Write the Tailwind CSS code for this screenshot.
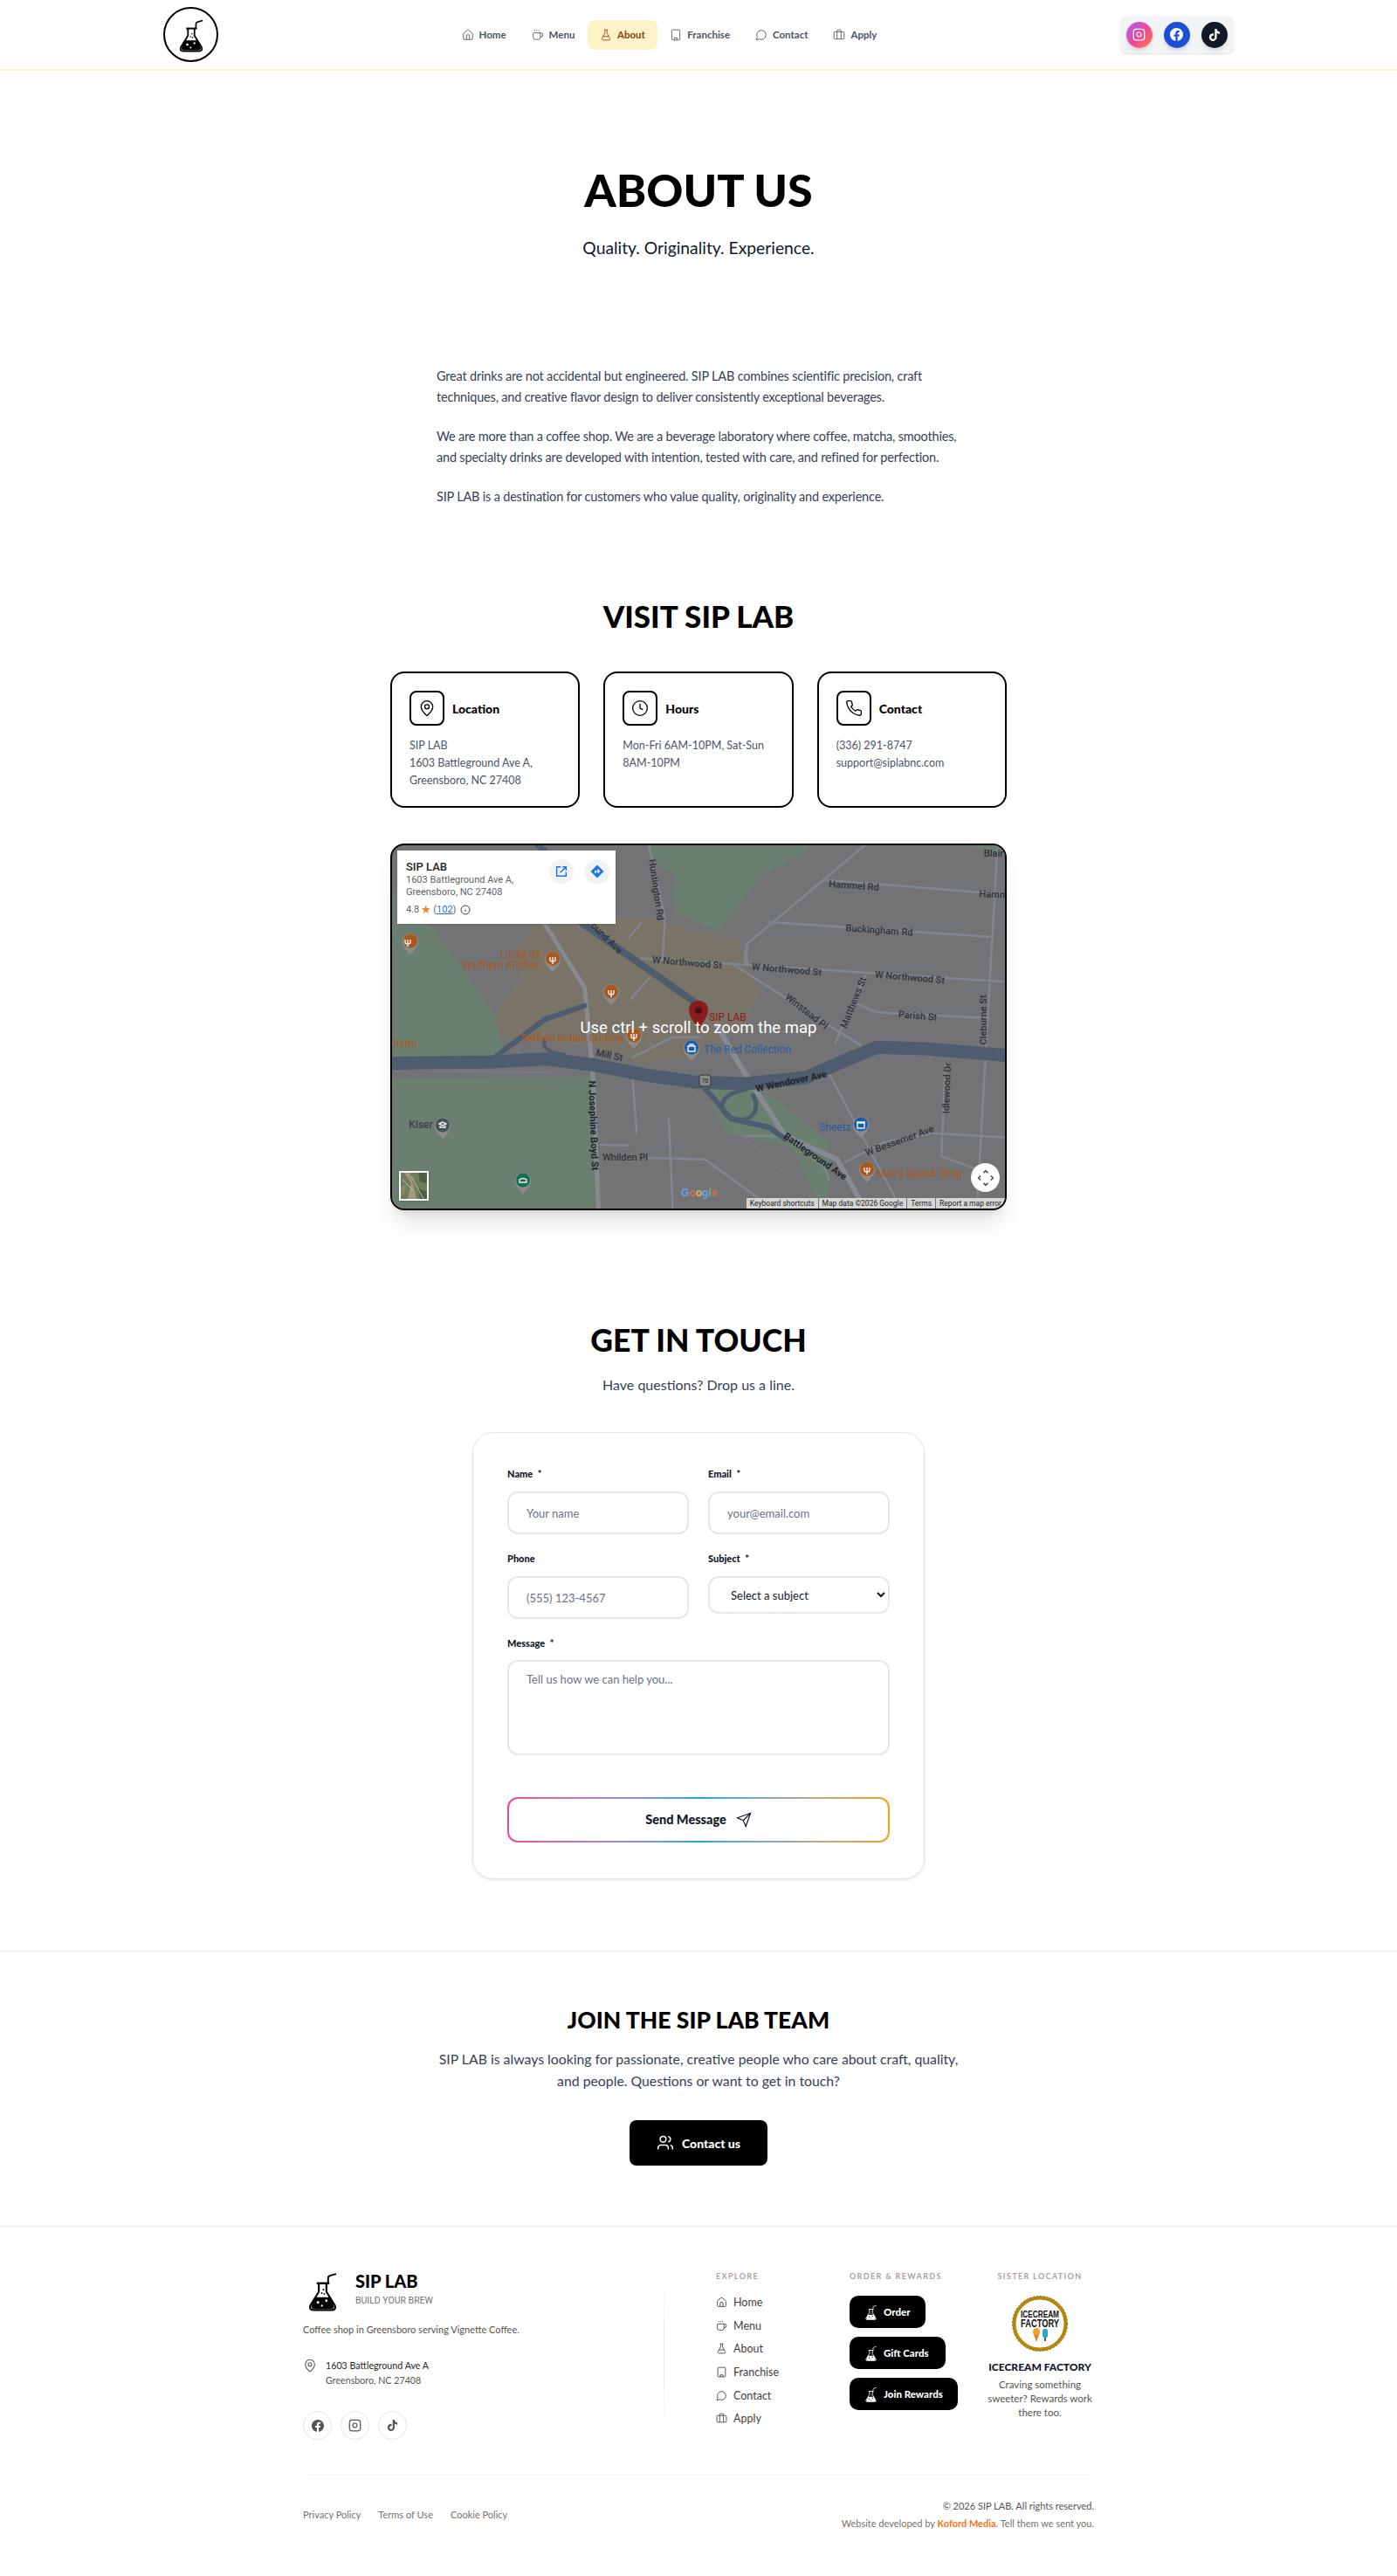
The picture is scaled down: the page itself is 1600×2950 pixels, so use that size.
<!DOCTYPE html>
<html lang="en">
<head>
<meta charset="utf-8">
<title>About - SIP LAB</title>
<script src="https://cdn.jsdelivr.net/npm/@tailwindcss/browser@4"></script>
</head>
<body class="bg-white [font-family:Lato,sans-serif] text-[#374151]">
<svg class="hidden">
  <symbol id="flask" viewBox="0 0 34 47">
    <path d="M23.5 14V8.5Q23.5 6 26 5.4L33 3.5" fill="none" stroke="currentColor" stroke-width="2"/>
    <path d="M10 14.5H25" fill="none" stroke="currentColor" stroke-width="2.4"/>
    <path d="M12.5 15V24.5L2.6 40.5Q0.5 46 6 46H28Q33.5 46 31.4 40.5L21.5 24.5V15" fill="none" stroke="currentColor" stroke-width="2.2" stroke-linejoin="round"/>
    <path fill-rule="evenodd" fill="currentColor" d="M8.6 31H25.4L30 40.5Q31.5 44.6 27.5 44.6H6.5Q2.5 44.6 4 40.5ZM10 37a1.6 1.6 0 1 0 3.2 0a1.6 1.6 0 1 0-3.2 0ZM20 35a1.4 1.4 0 1 0 2.8 0a1.4 1.4 0 1 0-2.8 0ZM15 41a1.2 1.2 0 1 0 2.4 0a1.2 1.2 0 1 0-2.4 0Z"/>
    <circle cx="18" cy="22" r="1" fill="currentColor"/><circle cx="16" cy="26" r="1" fill="currentColor"/><circle cx="19" cy="27" r="1" fill="currentColor"/>
  </symbol>
  <symbol id="home" viewBox="0 0 24 24"><path d="M15 21v-8a1 1 0 0 0-1-1h-4a1 1 0 0 0-1 1v8"/><path d="M3 10a2 2 0 0 1 .709-1.528l7-5.999a2 2 0 0 1 2.582 0l7 5.999A2 2 0 0 1 21 10v9a2 2 0 0 1-2 2H5a2 2 0 0 1-2-2z"/></symbol>
  <symbol id="coffee" viewBox="0 0 24 24"><path d="M10 2v2"/><path d="M14 2v2"/><path d="M16 8a1 1 0 0 1 1 1v8a4 4 0 0 1-4 4H7a4 4 0 0 1-4-4V9a1 1 0 0 1 1-1h14a4 4 0 1 1 0 8h-1"/><path d="M6 2v2"/></symbol>
  <symbol id="conical" viewBox="0 0 24 24"><path d="M14 2v6a2 2 0 0 0 .245.96l5.51 10.08A2 2 0 0 1 18 22H6a2 2 0 0 1-1.755-2.96l5.51-10.08A2 2 0 0 0 10 8V2"/><path d="M6.453 15h11.094"/><path d="M8.5 2h7"/></symbol>
  <symbol id="building" viewBox="0 0 24 24"><rect width="16" height="20" x="4" y="2" rx="2" ry="2"/><path d="M9 22v-4h6v4"/><path d="M8 6h.01"/><path d="M16 6h.01"/><path d="M12 6h.01"/><path d="M12 10h.01"/><path d="M12 14h.01"/><path d="M16 10h.01"/><path d="M16 14h.01"/><path d="M8 10h.01"/><path d="M8 14h.01"/></symbol>
  <symbol id="message" viewBox="0 0 24 24"><path d="M7.9 20A9 9 0 1 0 4 16.1L2 22Z"/></symbol>
  <symbol id="briefcase" viewBox="0 0 24 24"><path d="M16 20V4a2 2 0 0 0-2-2h-4a2 2 0 0 0-2 2v16"/><rect width="20" height="14" x="2" y="6" rx="2"/></symbol>
  <symbol id="pin" viewBox="0 0 24 24"><path d="M20 10c0 4.993-5.539 10.193-7.399 11.799a1 1 0 0 1-1.202 0C9.539 20.193 4 14.993 4 10a8 8 0 0 1 16 0"/><circle cx="12" cy="10" r="3"/></symbol>
  <symbol id="insta" viewBox="0 0 24 24"><rect width="20" height="20" x="2" y="2" rx="5" ry="5"/><path d="M16 11.37A4 4 0 1 1 12.63 8 4 4 0 0 1 16 11.37z"/><path d="M17.5 6.5h.01"/></symbol>
  <symbol id="fb" viewBox="0 0 24 24"><path d="M24 12.073c0-6.627-5.373-12-12-12s-12 5.373-12 12c0 5.99 4.388 10.954 10.125 11.854v-8.385H7.078v-3.47h3.047V9.43c0-3.007 1.792-4.669 4.533-4.669 1.312 0 2.686.235 2.686.235v2.953H15.83c-1.491 0-1.956.925-1.956 1.874v2.25h3.328l-.532 3.47h-2.796v8.385C19.612 23.027 24 18.062 24 12.073z"/></symbol>
  <symbol id="tt" viewBox="0 0 24 24"><path d="M12.525.02c1.31-.02 2.61-.01 3.91-.02.08 1.53.63 3.09 1.75 4.17 1.12 1.11 2.7 1.62 4.24 1.79v4.03c-1.44-.05-2.89-.35-4.2-.97-.57-.26-1.1-.59-1.62-.93-.01 2.92.01 5.84-.02 8.75-.08 1.4-.54 2.79-1.35 3.94-1.31 1.92-3.58 3.17-5.91 3.21-1.43.08-2.86-.31-4.08-1.03-2.02-1.19-3.44-3.37-3.65-5.71-.02-.5-.03-1-.01-1.49.18-1.9 1.12-3.72 2.58-4.96 1.66-1.44 3.98-2.13 6.15-1.72.02 1.48-.04 2.96-.04 4.44-.99-.32-2.15-.23-3.02.37-.63.41-1.11 1.04-1.36 1.75-.21.51-.15 1.07-.14 1.61.24 1.64 1.82 3.02 3.5 2.87 1.12-.01 2.19-.66 2.77-1.61.19-.33.4-.67.41-1.06.1-1.79.06-3.57.07-5.36.01-4.03-.01-8.05.02-12.07z"/></symbol>
  <symbol id="poi" viewBox="0 0 20 26"><path d="M10 25.5C7 21 .8 17 .8 10a9.2 9.2 0 0 1 18.4 0C19.2 17 13 21 10 25.5Z" fill="#8b8b8b"/><circle cx="10" cy="9.5" r="8"/></symbol>
</svg>

<header class="h-[81px] border-b-2 border-[#fef3c7] px-[187px] flex items-center justify-between">
  <div class="w-[63px] h-[63px] rounded-full border-2 border-black flex items-center justify-center text-black">
    <svg class="w-[28px] h-[40px]"><use href="#flask"/></svg>
  </div>
  <nav class="flex items-center text-[11.5px] font-bold text-[#4b5563]">
    <a class="flex items-center gap-[6px] h-[34px] px-[14.5px]"><svg class="w-[14px] h-[14px]" fill="none" stroke="currentColor" stroke-width="1.5"><use href="#home"/></svg>Home</a>
    <a class="flex items-center gap-[6px] h-[34px] px-[14.5px]"><svg class="w-[14px] h-[14px]" fill="none" stroke="currentColor" stroke-width="1.5"><use href="#coffee"/></svg>Menu</a>
    <a class="flex items-center gap-[6px] h-[34px] px-[14px] rounded-lg bg-[#fef3c7] text-[#92400e]"><svg class="w-[14px] h-[14px]" fill="none" stroke="currentColor" stroke-width="1.5"><use href="#conical"/></svg>About</a>
    <a class="flex items-center gap-[6px] h-[34px] px-[14.5px]"><svg class="w-[14px] h-[14px]" fill="none" stroke="currentColor" stroke-width="1.5"><use href="#building"/></svg>Franchise</a>
    <a class="flex items-center gap-[6px] h-[34px] px-[14.5px]"><svg class="w-[14px] h-[14px]" fill="none" stroke="currentColor" stroke-width="1.5"><use href="#message"/></svg>Contact</a>
    <a class="flex items-center gap-[6px] h-[34px] px-[14.5px]"><svg class="w-[14px] h-[14px]" fill="none" stroke="currentColor" stroke-width="1.5"><use href="#briefcase"/></svg>Apply</a>
  </nav>
  <div class="w-[130px] h-[43px] rounded-lg bg-[#f3f4f6] flex items-center justify-center gap-[13px] shadow-sm">
    <span class="w-[30px] h-[30px] rounded-full bg-linear-to-br from-[#a855f7] via-[#ec4899] to-[#f97316] text-white flex items-center justify-center shadow-md"><svg class="w-[15px] h-[15px]" fill="none" stroke="currentColor" stroke-width="2"><use href="#insta"/></svg></span>
    <span class="w-[30px] h-[30px] rounded-full bg-[#1d4ed8] text-white flex items-center justify-center shadow-md"><svg class="w-[15px] h-[15px]" fill="currentColor"><use href="#fb"/></svg></span>
    <span class="w-[30px] h-[30px] rounded-full bg-[#111827] text-white flex items-center justify-center shadow-md"><svg class="w-[14px] h-[14px]" fill="currentColor"><use href="#tt"/></svg></span>
  </div>
</header>

<main>
  <section class="text-center">
    <h1 class="mt-[108px] text-[52px] leading-[56px] font-black text-black">ABOUT US</h1>
    <p class="mt-[25px] text-[19.3px] leading-[28px] text-[#111827]">Quality. Originality. Experience.</p>
  </section>

  <section class="mt-[121px] ml-[500px] w-[620px] whitespace-nowrap text-[14.5px] tracking-[-0.19px] leading-[24px] text-[#374151] flex flex-col gap-[21px]">
    <p>Great drinks are not accidental but engineered. SIP LAB combines scientific precision, craft<br>techniques, and creative flavor design to deliver consistently exceptional beverages.</p>
    <p>We are more than a coffee shop. We are a beverage laboratory where coffee, matcha, smoothies,<br>and specialty drinks are developed with intention, tested with care, and refined for perfection.</p>
    <p>SIP LAB is a destination for customers who value quality, originality and experience.</p>
  </section>

  <section class="mt-[104px]">
    <h2 class="text-center text-[35px] leading-[40px] font-black text-black">VISIT SIP LAB</h2>
    <div class="mt-[44px] mx-auto w-[706px] grid grid-cols-3 gap-[27px]">
      <div class="h-[156px] rounded-2xl border-2 border-black px-5 pt-5">
        <div class="flex items-center gap-[9px]"><span class="w-10 h-10 rounded-lg border-2 border-black flex items-center justify-center"><svg class="w-5 h-5" fill="none" stroke="black" stroke-width="1.6"><use href="#pin"/></svg></span><h3 class="text-[14px] font-black text-black">Location</h3></div>
        <p class="mt-[13px] text-[12.5px] leading-[20px] whitespace-nowrap text-[#4b5563]">SIP LAB<br>1603 Battleground Ave A,<br>Greensboro, NC 27408</p>
      </div>
      <div class="h-[156px] rounded-2xl border-2 border-black px-5 pt-5">
        <div class="flex items-center gap-[9px]"><span class="w-10 h-10 rounded-lg border-2 border-black flex items-center justify-center"><svg class="w-5 h-5" viewBox="0 0 24 24" fill="none" stroke="black" stroke-width="1.6"><circle cx="12" cy="12" r="10"/><path d="M12 6v6l4 2"/></svg></span><h3 class="text-[14px] font-black text-black">Hours</h3></div>
        <p class="mt-[13px] text-[12.5px] leading-[20px] whitespace-nowrap text-[#4b5563]">Mon-Fri 6AM-10PM, Sat-Sun<br>8AM-10PM</p>
      </div>
      <div class="h-[156px] rounded-2xl border-2 border-black px-5 pt-5">
        <div class="flex items-center gap-[9px]"><span class="w-10 h-10 rounded-lg border-2 border-black flex items-center justify-center"><svg class="w-5 h-5" viewBox="0 0 24 24" fill="none" stroke="black" stroke-width="1.6"><path d="M22 16.92v3a2 2 0 0 1-2.18 2 19.79 19.79 0 0 1-8.63-3.07 19.5 19.5 0 0 1-6-6 19.79 19.79 0 0 1-3.07-8.67A2 2 0 0 1 4.11 2h3a2 2 0 0 1 2 1.72 12.84 12.84 0 0 0 .7 2.81 2 2 0 0 1-.45 2.11L8.09 9.91a16 16 0 0 0 6 6l1.27-1.27a2 2 0 0 1 2.11-.45 12.84 12.84 0 0 0 2.81.7A2 2 0 0 1 22 16.92z"/></svg></span><h3 class="text-[14px] font-black text-black">Contact</h3></div>
        <p class="mt-[13px] text-[12.5px] leading-[20px] whitespace-nowrap text-[#4b5563]">(336) 291-8747<br>support@siplabnc.com</p>
      </div>
    </div>

    <div class="relative mt-[41px] mx-auto w-[706px] h-[420px] rounded-2xl border-2 border-black overflow-hidden shadow-xl bg-[#737375] [font-family:Roboto,sans-serif]">
      <svg class="absolute left-[-2px] top-[-2px] w-[706px] h-[420px]" viewBox="0 0 706 420">
        <g transform="translate(-7,-5) scale(0.4591,0.3333)" fill="none" stroke-linecap="round" stroke-linejoin="round">
          <path d="M15 820L530 815V1290H15Z" fill="#6a7f70"/>
          <path d="M15 170L130 320L280 610L300 745L15 760Z" fill="#6a7f70"/>
          <path d="M725 15H1085L945 120L835 315L725 255Z" fill="#6a7f70"/>
          <path d="M655 15H720L830 225L820 225L660 60Z" fill="#6a7f70"/>
          <path d="M800 845L940 850L1110 1040L1110 1230L1075 1230L1020 1060L850 1010Z" fill="#6a7f70"/>
          <path d="M1430 15H1553V60Z" fill="#6a7f70"/>
          <path d="M380 290L500 290L640 270L740 300L880 350L935 530L900 640L760 750L640 770L500 710L290 680L275 600L340 480L330 380Z" fill="#7a7368"/>
          <g stroke="#808690" stroke-width="2.5">
            <path vector-effect="non-scaling-stroke" d="M660 20L700 270L695 410"/>
            <path vector-effect="non-scaling-stroke" d="M1200 20L905 360V430"/>
            <path vector-effect="non-scaling-stroke" d="M960 285L1510 335"/>
            <path vector-effect="non-scaling-stroke" d="M1100 140L1553 190"/>
            <path vector-effect="non-scaling-stroke" d="M640 410L880 430L1553 490"/>
            <path vector-effect="non-scaling-stroke" d="M870 430L1190 710"/>
            <path vector-effect="non-scaling-stroke" d="M1200 470L1125 700"/>
            <path vector-effect="non-scaling-stroke" d="M1170 560L1230 595L1510 615"/>
            <path vector-effect="non-scaling-stroke" d="M1530 20L1480 1240"/>
            <path vector-effect="non-scaling-stroke" d="M1400 770L1390 1090L1470 1130"/>
            <path vector-effect="non-scaling-stroke" d="M1150 1110L1250 1040L1370 1010L1553 1025"/>
            <path vector-effect="non-scaling-stroke" d="M660 1095L800 1100L950 1250"/>
            <path vector-effect="non-scaling-stroke" d="M1100 780L1290 1272"/>
            <path vector-effect="non-scaling-stroke" d="M710 960L720 1272"/>
            <path vector-effect="non-scaling-stroke" d="M620 830L630 1010"/>
            <path vector-effect="non-scaling-stroke" d="M540 1050L610 1052"/>
            <path vector-effect="non-scaling-stroke" d="M900 1020H1000L1100 1130L1110 1170"/>
            <path vector-effect="non-scaling-stroke" d="M620 750L720 680L790 680"/>
            <path vector-effect="non-scaling-stroke" d="M900 380V430"/>
            <path vector-effect="non-scaling-stroke" d="M610 340L640 290"/>
            <path vector-effect="non-scaling-stroke" d="M615 550L660 480"/>
          </g>
          <path vector-effect="non-scaling-stroke" d="M400 290L500 510L520 800L535 1272" stroke="#868b92" stroke-width="5"/>
          <path vector-effect="non-scaling-stroke" d="M830 640L880 760L1000 1020L1130 1100L1200 1272" stroke="#868b92" stroke-width="6"/>
          <path vector-effect="non-scaling-stroke" d="M480 290L700 780L1100 1272" stroke="#7f7f7f" stroke-width="1"/>
          <path vector-effect="non-scaling-stroke" d="M380 15L400 40" stroke="#4d5c6e" stroke-width="7"/>
          <path vector-effect="non-scaling-stroke" d="M490 285L780 565" stroke="#4d5c6e" stroke-width="8"/>
          <path vector-effect="non-scaling-stroke" d="M280 745L400 620L500 572" stroke="#4d5c6e" stroke-width="6"/>
          <path vector-effect="non-scaling-stroke" d="M400 690C390 720 420 735 450 740" stroke="#4d5c6e" stroke-width="4"/>
          <path vector-effect="non-scaling-stroke" d="M800 855L865 960L960 990L1000 1030" stroke="#4d5c6e" stroke-width="6"/>
          <path vector-effect="non-scaling-stroke" d="M900 860C830 880 830 940 870 960C920 980 940 920 920 880" stroke="#4d5c6e" stroke-width="5"/>
          <path vector-effect="non-scaling-stroke" d="M-5 770L270 765L400 755L520 775L650 810L780 835L900 840L1050 820L1150 760L1230 715L1350 720L1570 745" stroke="#4d5c6e" stroke-width="15"/>
          <path vector-effect="non-scaling-stroke" d="M130 797L420 802" stroke="#767b82" stroke-width="3"/>
        </g>
        <g font-size="11" fill="#2f343a" text-anchor="middle" font-weight="500">
          <text x="531" y="52" transform="rotate(4 531 48)">Hammel Rd</text>
          <text x="691" y="62" transform="rotate(3 691 58)">Hamm</text>
          <text x="691" y="15">Blair</text>
          <text x="560" y="103" transform="rotate(4 560 99)">Buckingham Rd</text>
          <text x="340" y="140" transform="rotate(5 340 136)">W Northwood St</text>
          <text x="454" y="148" transform="rotate(5 454 144)">W Northwood St</text>
          <text x="595" y="157" transform="rotate(5 595 153)">W Northwood St</text>
          <text x="305" y="57" transform="rotate(82 305 53)">Huntington Rd</text>
          <text x="248" y="112" transform="rotate(45 248 108)">ound Ave</text>
          <text x="251" y="246" transform="rotate(12 251 242)">Mill St</text>
          <text x="459" y="276" transform="rotate(-12 459 272)" font-weight="700" fill="#20242a">W Wendover Ave</text>
          <text x="233" y="327" transform="rotate(88 233 323)" font-weight="700" fill="#20242a">N Josephine Boyd St</text>
          <text x="269" y="363">Whilden Pl</text>
          <text x="487" y="362" transform="rotate(35 487 358)" font-weight="700" fill="#20242a">Battleground Ave</text>
          <text x="583" y="344" transform="rotate(-20 583 340)">W Bessemer Ave</text>
          <text x="477" y="196" transform="rotate(38 477 192)">Winstead Pl</text>
          <text x="530" y="186" transform="rotate(-68 530 182)">Matthews St</text>
          <text x="604" y="201" transform="rotate(5 604 197)">Parish St</text>
          <text x="679" y="206" transform="rotate(-90 679 202)">Cleburne St</text>
          <text x="637" y="284" transform="rotate(-88 637 280)">Idlewood Dr</text>
          <text x="35" y="326" fill="#3d4248" font-size="12">Kiser</text>
        </g>
        <g font-size="12" fill="#a8571e" text-anchor="end">
          <text x="173" y="131">Lucky 32</text>
          <text x="173" y="143">Southern Kitchen</text>
          <text x="267" y="227">Saffron Indian Cuisine</text>
          <text x="31" y="233">Bistro</text>
          <text x="655" y="382">Mac's Speed Shop</text>
        </g>
        <text x="365" y="203" font-size="12" fill="#8e1a1a">SIP LAB</text>
        <text x="359" y="240" font-size="12" fill="#2a5da0">The Red Collection</text>
        <text x="491" y="329" font-size="12" fill="#2a5da0">Sheetz</text>
        <g fill="#a8571e">
          <use href="#poi" x="13" y="102" width="20" height="26"/>
          <use href="#poi" x="176" y="122" width="20" height="26"/>
          <use href="#poi" x="243" y="160" width="20" height="26"/>
          <use href="#poi" x="269" y="210" width="20" height="26"/>
          <use href="#poi" x="536" y="363" width="20" height="26"/>
        </g>
        <use href="#poi" x="335" y="224" width="20" height="26" fill="#1a5fa8"/>
        <use href="#poi" x="529" y="312" width="20" height="26" fill="#1a5fa8"/>
        <use href="#poi" x="50" y="313" width="20" height="26" fill="#4a5058"/>
        <use href="#poi" x="142" y="376" width="20" height="26" fill="#14704f"/>
        <g fill="none" stroke="#eee" stroke-width="1.4">
          <path d="M20 110v8M17 110v3q0 2 3 2t3-2v-3"/><path d="M183 130v8M180 130v3q0 2 3 2t3-2v-3" transform="translate(3)"/><path d="M253 168v8M250 168v3q0 2 3 2t3-2v-3"/><path d="M279 218v8M276 218v3q0 2 3 2t3-2v-3"/><path d="M546 371v8M543 371v3q0 2 3 2t3-2v-3"/>
          <path d="M341 232h8v6h-8zM343 232v-2h4v2"/><path d="M535 320h8v6h-8zM534 319h10"/><path d="M56 321l4-2 4 2-4 2zM57 323v2h6v-2"/><path d="M148 385q4-3 8 0v3h-8z"/>
        </g>
        <path d="M353 180C345 180 342 186 342 191C342 199 350 206 353 214C356 206 364 199 364 191C364 186 361 180 353 180Z" fill="#8a1c1c"/>
        <circle cx="353" cy="191" r="4" fill="#4a0e0e"/>
        <rect x="354" y="265" width="13" height="13" rx="3" fill="#8a8a8a" stroke="#333"/>
        <text x="360.5" y="274" font-size="7" text-anchor="middle" fill="#222">70</text>
      </svg>
      <p class="absolute inset-x-0 top-[195px] text-center text-white text-[18.5px] leading-[28px]">Use ctrl + scroll to zoom the map</p>

      <div class="absolute left-[6px] top-[6px] w-[250px] h-[84px] bg-white shadow-sm">
        <p class="absolute left-[10px] top-[11px] text-[13px] leading-[16px] font-medium text-[#222]">SIP LAB</p>
        <p class="absolute left-[10px] top-[27px] text-[11px] leading-[14px] text-[#5f6368]">1603 Battleground Ave A,<br>Greensboro, NC 27408</p>
        <div class="absolute left-[10px] top-[61px] flex items-center gap-[2px] text-[11px] leading-[14px] text-[#5f6368]">4.8 <span class="text-[#e8862c] text-[13px] leading-[14px]">★</span> <span>(<span class="text-[#1a73e8] underline">102</span>)</span><svg class="ml-[3px] w-[12px] h-[12px]" viewBox="0 0 24 24" fill="none" stroke="#444" stroke-width="2"><circle cx="12" cy="12" r="10"/><path d="M12 16v-5M12 8h.01"/></svg></div>
        <span class="absolute left-[174px] top-[10px] w-[28px] h-[28px] rounded-full bg-[#f1f3f4] flex items-center justify-center"><svg class="w-4 h-4" viewBox="0 0 24 24" fill="none" stroke="#1a73e8" stroke-width="2.2"><path d="M11 4H4v16h16v-7M10 14L20 4M14 4h6v6"/></svg></span>
        <span class="absolute left-[215px] top-[10px] w-[28px] h-[28px] rounded-full bg-[#f1f3f4] flex items-center justify-center"><svg class="w-[18px] h-[18px]" viewBox="0 0 24 24"><path d="M12 2L22 12L12 22L2 12Z" fill="#1a73e8"/><path d="M9 15v-3.5h6M12.5 8.5l3 3-3 3" fill="none" stroke="white" stroke-width="1.8"/></svg></span>
      </div>
      <svg class="absolute left-[8px] top-[373px] w-[34px] h-[34px] border-2 border-white shadow" viewBox="0 0 30 30"><rect width="30" height="30" fill="#6f7d5c"/><path d="M4 0L12 12L8 30H18L14 12L10 0Z" fill="#a39a7e"/><path d="M20 0H30V12L22 10Z" fill="#4e5d45"/><path d="M20 18L30 22V30H22Z" fill="#4e5d45"/><path d="M0 16L6 14L4 24L0 26Z" fill="#8b8468"/><path d="M12 4L26 30M2 8L14 20" stroke="#c4bda6" fill="none"/></svg>
      <span class="absolute left-[663px] top-[364px] w-[33px] h-[33px] rounded-full bg-white flex items-center justify-center"><svg class="w-[20px] h-[20px]" viewBox="0 0 24 24" fill="none" stroke="#555" stroke-width="2"><path d="M9 5l3-3 3 3M9 19l3 3 3-3M5 9l-3 3 3 3M19 9l3 3-3 3"/></svg></span>
      <p class="absolute left-[331px] top-[391px] text-[12px] leading-[14px] font-bold [font-family:'Liberation_Sans',sans-serif]"><span class="text-[#6f9ae8]">G</span><span class="text-[#d8655a]">o</span><span class="text-[#dcb64e]">o</span><span class="text-[#6f9ae8]">g</span><span class="text-[#6cb47c]">l</span><span class="text-[#d8655a]">e</span></p>
      <div class="absolute right-[0px] bottom-[0px] h-[12px] flex items-center gap-[1px] text-[8.5px] leading-[12px] text-[#222]">
        <span class="px-[4px] bg-[#d6d6d6]">Keyboard shortcuts</span><span class="px-[4px] bg-[#d6d6d6]">Map data ©2026 Google</span><span class="px-[4px] bg-[#d6d6d6]">Terms</span><span class="px-[4px] bg-[#d6d6d6]">Report a map error</span>
      </div>
    </div>
  </section>

  <section class="mt-[129px]">
    <h2 class="text-center text-[35.5px] leading-[40px] font-black text-black">GET IN TOUCH</h2>
    <p class="mt-[19px] text-center text-[16px] leading-[24px] text-[#374151]">Have questions? Drop us a line.</p>
    <form class="mt-[42px] mx-auto w-[518px] h-[512px] rounded-[24px] border border-[#e5e7eb] shadow-sm px-[39px] pt-[39px]">
      <div class="grid grid-cols-2 gap-x-[22px]">
        <div>
          <label class="block text-[11px] leading-[16px] font-black text-[#111827]">Name <span class="ml-[3px]">*</span></label>
          <input placeholder="Your name" class="mt-[12px] block w-full h-[49px] rounded-xl border-2 border-[#e5e7eb] px-5 text-[13px] placeholder:text-[#6b7280]">
        </div>
        <div>
          <label class="block text-[11px] leading-[16px] font-black text-[#111827]">Email <span class="ml-[3px]">*</span></label>
          <input placeholder="your@email.com" class="mt-[12px] block w-full h-[49px] rounded-xl border-2 border-[#e5e7eb] px-5 text-[13px] placeholder:text-[#6b7280]">
        </div>
        <div class="mt-[20px]">
          <label class="block text-[11px] leading-[16px] font-black text-[#111827]">Phone</label>
          <input placeholder="(555) 123-4567" class="mt-[12px] block w-full h-[49px] rounded-xl border-2 border-[#e5e7eb] px-5 text-[13px] placeholder:text-[#6b7280]">
        </div>
        <div class="mt-[20px]">
          <label class="block text-[11px] leading-[16px] font-black text-[#111827]">Subject <span class="ml-[3px]">*</span></label>
          <select class="mt-[12px] block w-full h-[43px] rounded-xl border-2 border-[#e5e7eb] pl-5 text-[13px] text-[#111827] bg-white"><option>Select a subject</option></select>
        </div>
      </div>
      <div class="mt-[20px]">
        <label class="block text-[11px] leading-[16px] font-black text-[#111827]">Message <span class="ml-[3px]">*</span></label>
        <textarea placeholder="Tell us how we can help you..." class="mt-[11px] block w-full h-[109px] rounded-xl border-2 border-[#e5e7eb] px-5 py-[11px] text-[13px] resize-none placeholder:text-[#6b7280]"></textarea>
      </div>
      <div class="mt-[48px] h-[52px] rounded-xl p-[2px] bg-linear-to-r from-[#ec4899] via-[#0ea5e9] to-[#f59e0b]">
        <div class="h-full rounded-[10px] bg-white flex items-center justify-center gap-[11px] text-[14.5px] font-black text-[#111827]">Send Message<svg class="w-[18px] h-[18px]" viewBox="0 0 24 24" fill="none" stroke="#111827" stroke-width="1.6"><path d="m22 2-7 20-4-9-9-4Z"/><path d="M22 2 11 13"/></svg></div>
      </div>
    </form>
  </section>

  <section class="mt-[82px] border-t border-[#e5e7eb] h-[313px] text-center">
    <h2 class="mt-[60px] text-[26.5px] leading-[36px] font-black text-black">JOIN THE SIP LAB TEAM</h2>
    <p class="mt-[14px] text-[15.8px] leading-[25px] text-[#374151]">SIP LAB is always looking for passionate, creative people who care about craft, quality,<br>and people. Questions or want to get in touch?</p>
    <a class="mt-[33px] mx-auto w-[158px] h-[52px] rounded-lg bg-black text-white flex items-center justify-center gap-[9px] text-[14px] font-black"><svg class="w-5 h-5" viewBox="0 0 24 24" fill="none" stroke="white" stroke-width="1.8"><path d="M16 21v-2a4 4 0 0 0-4-4H6a4 4 0 0 0-4 4v2"/><circle cx="9" cy="7" r="4"/><path d="M22 21v-2a4 4 0 0 0-3-3.87"/><path d="M16 3.13a4 4 0 0 1 0 7.75"/></svg>Contact us</a>
  </section>
</main>

<footer class="mt-[2px] border-t border-[#e5e7eb] h-[403px] px-[347px] pt-[50px]">
  <div class="flex h-[234px] items-start">
    <div class="w-[413px] h-[192px]">
      <div class="flex items-start">
        <svg class="ml-[6px] w-[33px] h-[47px] text-black"><use href="#flask"/></svg>
        <div class="ml-[21px]">
          <p class="text-[20px] leading-[24px] font-black text-black">SIP LAB</p>
          <p class="mt-[4px] text-[10.5px] leading-[14px] text-[#78716c] [font-family:Roboto,sans-serif]">BUILD YOUR BREW</p>
        </div>
      </div>
      <p class="mt-[13px] text-[11px] leading-[16px] text-[#57534e]">Coffee shop in Greensboro serving Vignette Coffee.</p>
      <div class="mt-[24px] flex items-start gap-[10px]">
        <svg class="mt-[1px] w-[16px] h-[16px] shrink-0" fill="none" stroke="#57534e" stroke-width="1.6"><use href="#pin"/></svg>
        <p class="text-[10.7px] leading-[17px] text-[#292524]">1603 Battleground Ave A<br><span class="text-[#57534e]">Greensboro, NC 27408</span></p>
      </div>
      <div class="mt-[27px] flex gap-[10px] text-[#57534e]">
        <span class="w-[33px] h-[33px] rounded-full border border-[#e7e5e4] flex items-center justify-center"><svg class="w-[14px] h-[14px]" fill="currentColor"><use href="#fb"/></svg></span>
        <span class="w-[33px] h-[33px] rounded-full border border-[#e7e5e4] flex items-center justify-center"><svg class="w-[15px] h-[15px]" fill="none" stroke="currentColor" stroke-width="2"><use href="#insta"/></svg></span>
        <span class="w-[33px] h-[33px] rounded-full border border-[#e7e5e4] flex items-center justify-center"><svg class="w-[13px] h-[13px]" fill="currentColor"><use href="#tt"/></svg></span>
      </div>
    </div>
    <div class="w-[1px] h-[192px] bg-linear-to-b from-white via-[#e5e7eb] to-white"></div>
    <div class="ml-[59px] w-[153px]">
      <h4 class="text-[9px] leading-[14px] font-bold tracking-[0.15em] text-[#a8a29e]">EXPLORE</h4>
      <ul class="mt-[13px] flex flex-col gap-[7.7px] text-[12.5px] leading-[19px] text-[#44403c]">
        <li class="flex items-center gap-[7px]"><svg class="w-[13px] h-[13px]" fill="none" stroke="currentColor" stroke-width="1.6"><use href="#home"/></svg>Home</li>
        <li class="flex items-center gap-[7px]"><svg class="w-[13px] h-[13px]" fill="none" stroke="currentColor" stroke-width="1.6"><use href="#coffee"/></svg>Menu</li>
        <li class="flex items-center gap-[7px]"><svg class="w-[13px] h-[13px]" fill="none" stroke="currentColor" stroke-width="1.6"><use href="#conical"/></svg>About</li>
        <li class="flex items-center gap-[7px]"><svg class="w-[13px] h-[13px]" fill="none" stroke="currentColor" stroke-width="1.6"><use href="#building"/></svg>Franchise</li>
        <li class="flex items-center gap-[7px]"><svg class="w-[13px] h-[13px]" fill="none" stroke="currentColor" stroke-width="1.6"><use href="#message"/></svg>Contact</li>
        <li class="flex items-center gap-[7px]"><svg class="w-[13px] h-[13px]" fill="none" stroke="currentColor" stroke-width="1.6"><use href="#briefcase"/></svg>Apply</li>
      </ul>
    </div>
    <div class="w-[156px]">
      <h4 class="text-[9px] leading-[14px] font-bold tracking-[0.15em] text-[#a8a29e]">ORDER &amp; REWARDS</h4>
      <div class="mt-[15px] flex flex-col items-start gap-[10px] text-[11.5px] font-black text-white">
        <a class="h-[37px] w-[87px] rounded-[10px] bg-black flex items-center pl-[18px] gap-[8px]"><svg class="w-[13px] h-[18px]"><use href="#flask"/></svg>Order</a>
        <a class="h-[37px] w-[110px] rounded-[10px] bg-black flex items-center pl-[18px] gap-[8px]"><svg class="w-[13px] h-[18px]"><use href="#flask"/></svg>Gift Cards</a>
        <a class="h-[37px] w-[124px] rounded-[10px] bg-black flex items-center pl-[18px] gap-[8px]"><svg class="w-[13px] h-[18px]"><use href="#flask"/></svg>Join Rewards</a>
      </div>
    </div>
    <div class="w-[124px] text-center">
      <h4 class="text-[9px] leading-[14px] font-bold tracking-[0.15em] text-[#a8a29e] whitespace-nowrap">SISTER LOCATION</h4>
      <svg class="mt-[14px] mx-auto w-[66px] h-[66px]" viewBox="0 0 66 66">
        <circle cx="33" cy="33" r="29.5" fill="white" stroke="#b8860b" stroke-width="4"/>
        <circle cx="33" cy="33" r="31.5" fill="none" stroke="#8a6508" stroke-width="1" stroke-dasharray="2 2"/>
        <text x="33" y="26" text-anchor="middle" font-size="10" font-weight="700" fill="#111" font-family="Liberation Sans" textLength="44" lengthAdjust="spacingAndGlyphs">ICECREAM</text>
        <text x="33" y="37" text-anchor="middle" font-size="12" font-weight="700" fill="#111" font-family="Liberation Sans" textLength="44" lengthAdjust="spacingAndGlyphs">FACTORY</text>
        <path d="M25 43h8l-4 11z" fill="#d98a1e"/><circle cx="29" cy="42" r="4" fill="#f0a030"/>
        <rect x="36" y="39" width="6" height="10" rx="2" fill="#2aa8c4"/><rect x="38" y="49" width="2" height="4" fill="#555"/>
      </svg>
      <p class="mt-[8px] text-[12px] leading-[18px] font-black text-[#111827] whitespace-nowrap">ICECREAM FACTORY</p>
      <p class="mt-[3px] text-[11.5px] leading-[16px] text-[#57534e] whitespace-nowrap">Craving something<br>sweeter? Rewards work<br>there too.</p>
    </div>
  </div>
  <div class="border-t border-[#f3f4f6] pt-[25px] flex justify-between items-center">
    <div class="flex gap-[20px] text-[11px] leading-[16px] text-[#78716c]"><a>Privacy Policy</a><a>Terms of Use</a><a>Cookie Policy</a></div>
    <div class="text-right text-[11px] leading-[20px] text-[#57534e]">
      <p>© 2026 SIP LAB. All rights reserved.</p>
      <p class="text-[#78716c]">Website developed by <span class="font-bold text-[#f97316]">Koford Media.</span> Tell them we sent you.</p>
    </div>
  </div>
</footer>
</body>
</html>
